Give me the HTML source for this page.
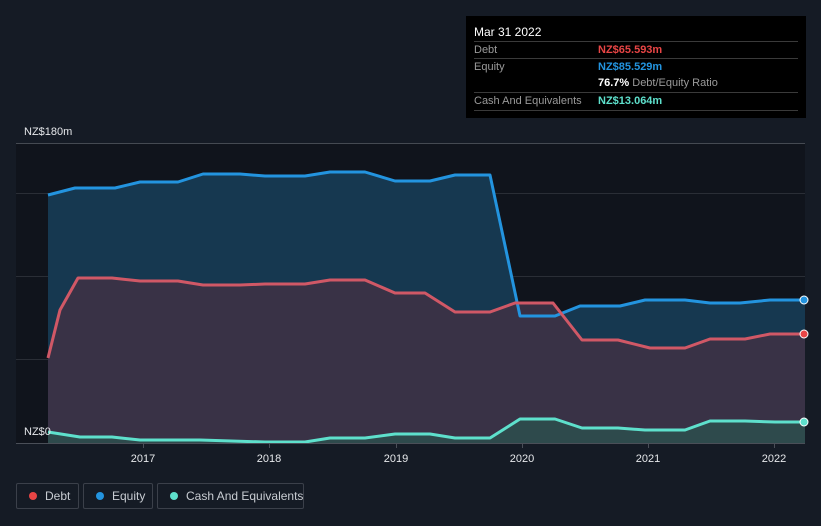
<!DOCTYPE html>
<html><head><meta charset="utf-8"><style>
html,body{margin:0;width:821px;height:526px;overflow:hidden}
body{background:#151b25;font-family:"Liberation Sans",sans-serif;position:relative}
.tt{position:absolute;left:466px;top:16px;width:340px;height:102px;background:#000;color:#fff;font-size:11px}
.tt .h{position:absolute;left:8px;top:9px;font-size:12px}
.row{position:absolute;left:8px;width:324px;height:17px;border-top:1px solid #3a3a3a;color:#9a9a9a;white-space:nowrap}
.row span{position:absolute;left:124px;font-weight:bold}
.lg{position:absolute;top:483px;height:26px;border:1px solid #3b404a;border-radius:2px;color:#c8ccd2;font-size:12px;line-height:24px;box-sizing:border-box;white-space:nowrap}
.lg i{position:absolute;left:12px;top:8px;width:8px;height:8px;border-radius:50%}
</style></head><body>
<svg width="821" height="526" style="position:absolute;left:0;top:0">
<rect x="16" y="144" width="789" height="299" fill="#10141c"/>
<g stroke="#2a2e36" stroke-width="1"><line x1="16" y1="143.5" x2="805" y2="143.5" stroke="#454a52"/><line x1="16" y1="193.5" x2="805" y2="193.5"/><line x1="16" y1="276.5" x2="805" y2="276.5"/><line x1="16" y1="359.5" x2="805" y2="359.5"/></g>
<polygon fill="#163850" points="48,195 75,188 115,188 140,182 178,182 203,174 240,174 265,176 305,176 330,172 365,172 395,181 430,181 455,175 490,175 520,316 555,316 580,306 620,306 645,300 685,300 710,303 740,303 770,300 805,300 805,443 48,443"/>
<polygon fill="#3b3246" opacity="0.95" points="48,358 60,310 78,278 112,278 140,281 178,281 203,285 240,285 265,284 305,284 330,280 365,280 395,293 425,293 455,312 490,312 515,303 553,303 582,340 618,340 650,348 685,348 710,339 745,339 770,334 805,334 805,443 48,443"/>
<polygon fill="#2e4a4c" points="48,432 80,437 112,437 140,440 200,440 265,442 305,442 330,438 365,438 395,434 430,434 455,438 490,438 520,419 555,419 582,428 618,428 645,430 685,430 710,421 745,421 775,422 805,422 805,443 48,443"/>
<g fill="none" stroke-width="3" stroke-linejoin="round">
<polyline stroke="#2394df" points="48,195 75,188 115,188 140,182 178,182 203,174 240,174 265,176 305,176 330,172 365,172 395,181 430,181 455,175 490,175 520,316 555,316 580,306 620,306 645,300 685,300 710,303 740,303 770,300 805,300"/>
<polyline stroke="#d05866" points="48,358 60,310 78,278 112,278 140,281 178,281 203,285 240,285 265,284 305,284 330,280 365,280 395,293 425,293 455,312 490,312 515,303 553,303 582,340 618,340 650,348 685,348 710,339 745,339 770,334 805,334"/>
<polyline stroke="#5ee0cc" points="48,432 80,437 112,437 140,440 200,440 265,442 305,442 330,438 365,438 395,434 430,434 455,438 490,438 520,419 555,419 582,428 618,428 645,430 685,430 710,421 745,421 775,422 805,422"/>
</g>
<line x1="16" y1="443.5" x2="805" y2="443.5" stroke="#4a4f58"/>
<g stroke="#4a4f58"><line x1="143.5" y1="443" x2="143.5" y2="448"/><line x1="269.5" y1="443" x2="269.5" y2="448"/><line x1="396.5" y1="443" x2="396.5" y2="448"/><line x1="522.5" y1="443" x2="522.5" y2="448"/><line x1="648.5" y1="443" x2="648.5" y2="448"/><line x1="774.5" y1="443" x2="774.5" y2="448"/></g>
<circle cx="804" cy="300" r="4" fill="#2394df" stroke="#fff" stroke-width="1"/>
<circle cx="804" cy="334" r="4" fill="#e84545" stroke="#fff" stroke-width="1"/>
<circle cx="804" cy="422" r="4" fill="#5ee0cc" stroke="#fff" stroke-width="1"/>
<g fill="#e6e8eb" font-size="11" font-family="Liberation Sans"><text x="24" y="135">NZ$180m</text><text x="24" y="435">NZ$0</text>
<g text-anchor="middle"><text x="143" y="462">2017</text><text x="269" y="462">2018</text><text x="396" y="462">2019</text><text x="522" y="462">2020</text><text x="648" y="462">2021</text><text x="774" y="462">2022</text></g></g>
</svg>
<div class="tt"><div class="h">Mar 31 2022</div>
<div class="row" style="top:25px;line-height:17px">Debt<span style="color:#e84545">NZ$65.593m</span></div>
<div class="row" style="top:42px;line-height:17px">Equity<span style="color:#2394df">NZ$85.529m</span></div>
<div class="row" style="top:59px;line-height:17px;border-top:none"><span style="color:#fff">76.7% <b style="color:#9a9a9a;font-weight:normal">Debt/Equity Ratio</b></span></div>
<div class="row" style="top:76px;line-height:17px">Cash And Equivalents<span style="color:#5ee0cc">NZ$13.064m</span></div>
<div class="row" style="top:94px;height:0"></div>
</div>
<div class="lg" style="left:16px;width:63px"><i style="background:#e84545"></i><span style="position:absolute;left:28px">Debt</span></div>
<div class="lg" style="left:83px;width:70px"><i style="background:#2394df"></i><span style="position:absolute;left:28px">Equity</span></div>
<div class="lg" style="left:157px;width:147px"><i style="background:#5ee0cc"></i><span style="position:absolute;left:28px">Cash And Equivalents</span></div>
</body></html>
